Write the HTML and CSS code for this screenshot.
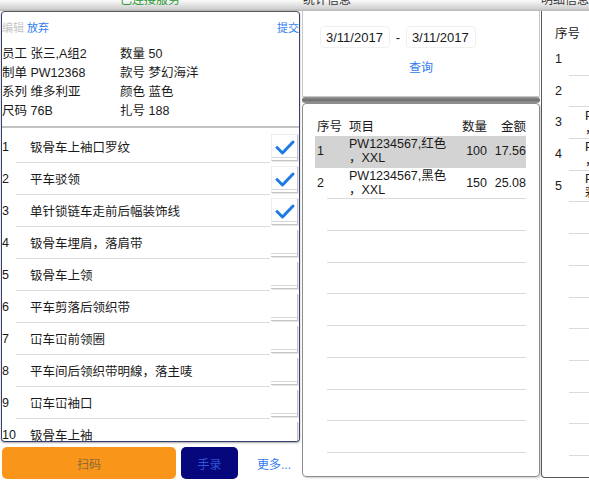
FILE: index.html
```html
<!DOCTYPE html>
<html lang="zh-CN">
<head>
    <meta charset="UTF-8">
    <meta name="viewport" content="width=device-width, initial-scale=1.0">
    <title>工序扫码</title>
    <link rel="stylesheet" href="styles.css">
</head>
<body>
    <div class="topbar">
        <span class="title title-main">已连接服务</span>
        <span class="title title-stat">统计信息</span>
        <span class="title title-detail">明细信息</span>
    </div>

    <div class="app">
        <!-- left: current work ticket -->
        <div class="left-col">
            <div class="ticket">
                <div class="ticket-head">
                    <div>
                        <span class="link-disabled">编辑</span>
                        <span class="link">放弃</span>
                    </div>
                    <span class="link">提交</span>
                </div>
                <div class="info-grid">
                    <div>员工 张三,A组2</div>
                    <div>数量 50</div>
                    <div>制单 PW12368</div>
                    <div>款号 梦幻海洋</div>
                    <div>系列 维多利亚</div>
                    <div>颜色 蓝色</div>
                    <div>尺码 76B</div>
                    <div>扎号 188</div>
                </div>
                <div class="info-sep"></div>
                <div class="op-list">
                    <div class="op-row">
                        <span class="op-num">1</span>
                        <div class="op-main">钑骨车上袖口罗纹</div>
                        <div class="chk checked">
                            <svg viewBox="0 0 27 27" width="27" height="27"><polyline points="6,13.5 11.5,19 22,8" /></svg>
                        </div>
                    </div>
                    <div class="op-row">
                        <span class="op-num">2</span>
                        <div class="op-main">平车驳领</div>
                        <div class="chk checked">
                            <svg viewBox="0 0 27 27" width="27" height="27"><polyline points="6,13.5 11.5,19 22,8" /></svg>
                        </div>
                    </div>
                    <div class="op-row">
                        <span class="op-num">3</span>
                        <div class="op-main">单针锁链车走前后幅装饰线</div>
                        <div class="chk checked">
                            <svg viewBox="0 0 27 27" width="27" height="27"><polyline points="6,13.5 11.5,19 22,8" /></svg>
                        </div>
                    </div>
                    <div class="op-row">
                        <span class="op-num">4</span>
                        <div class="op-main">钑骨车埋肩，落肩带</div>
                        <div class="chk"></div>
                    </div>
                    <div class="op-row">
                        <span class="op-num">5</span>
                        <div class="op-main">钑骨车上领</div>
                        <div class="chk"></div>
                    </div>
                    <div class="op-row">
                        <span class="op-num">6</span>
                        <div class="op-main">平车剪落后领织带</div>
                        <div class="chk"></div>
                    </div>
                    <div class="op-row">
                        <span class="op-num">7</span>
                        <div class="op-main">冚车冚前领圈</div>
                        <div class="chk"></div>
                    </div>
                    <div class="op-row">
                        <span class="op-num">8</span>
                        <div class="op-main">平车间后领织带明線，落主唛</div>
                        <div class="chk"></div>
                    </div>
                    <div class="op-row">
                        <span class="op-num">9</span>
                        <div class="op-main">冚车冚袖口</div>
                        <div class="chk"></div>
                    </div>
                    <div class="op-row">
                        <span class="op-num">10</span>
                        <div class="op-main">钑骨车上袖</div>
                        <div class="chk"></div>
                    </div>
                </div>
            </div>
            <div class="actions">
                <button class="btn btn-scan">扫码</button>
                <button class="btn btn-manual">手录</button>
                <span class="link more">更多...</span>
            </div>
        </div>

        <!-- middle: statistics -->
        <div class="mid-col">
            <div class="query-card">
                <div class="date-row">
                    <span class="date-box">3/11/2017</span>
                    <span class="date-dash">-</span>
                    <span class="date-box">3/11/2017</span>
                </div>
                <div class="link query">查询</div>
            </div>
            <div class="splitter"></div>
            <div class="stat-card">
                <div class="stat-head">
                    <span class="c-num">序号</span>
                    <span class="c-item">项目</span>
                    <span class="c-qty">数量</span>
                    <span class="c-amt">金额</span>
                </div>
                <div class="stat-row selected">
                    <span class="c-num">1</span>
                    <span class="c-item">PW1234567,红色<br>，XXL</span>
                    <span class="c-qty">100</span>
                    <span class="c-amt">17.56</span>
                </div>
                <div class="stat-row">
                    <span class="c-num">2</span>
                    <span class="c-item">PW1234567,黑色<br>，XXL</span>
                    <span class="c-qty">150</span>
                    <span class="c-amt">25.08</span>
                </div>
                <div class="stat-row"></div>
                <div class="stat-row"></div>
                <div class="stat-row"></div>
                <div class="stat-row"></div>
                <div class="stat-row"></div>
                <div class="stat-row"></div>
                <div class="stat-row"></div>
                <div class="stat-row"></div>
            </div>
        </div>

        <!-- right: details (cut off by the window) -->
        <div class="right-col">
            <div class="detail-head"><span class="d-num">序号</span></div>
            <div class="detail-row"><span class="d-num">1</span><span class="d-item"></span></div>
            <div class="detail-row"><span class="d-num">2</span><span class="d-item"></span></div>
            <div class="detail-row"><span class="d-num">3</span><span class="d-item">PW1234567<br>，XXL</span></div>
            <div class="detail-row"><span class="d-num">4</span><span class="d-item">PW1234567<br>，XXL</span></div>
            <div class="detail-row"><span class="d-num">5</span><span class="d-item">PW1234567<br>彩色</span></div>
            <div class="detail-row"></div>
            <div class="detail-row"></div>
            <div class="detail-row"></div>
            <div class="detail-row"></div>
            <div class="detail-row"></div>
            <div class="detail-row"></div>
            <div class="detail-row"></div>
            <div class="detail-row"></div>
        </div>
    </div>
</body>
</html>
```

FILE: styles.css
```css
/* Reset default browser styles */
body, html {
    margin: 0;
    padding: 0;
    width: 589px;
    height: 481px;
    overflow: hidden;
    background: #fff;
    color: #1a1a1a;
    font-family: "Liberation Sans", "Noto Sans CJK SC", sans-serif;
    font-size: 12.5px;
}

.link {
    color: #2f7bf0;
    cursor: pointer;
}

.link-disabled {
    color: #c4c4c4;
}

/* top strip with the cut off titles */
.topbar {
    display: flex;
    height: 11px;
    overflow: hidden;
    background: linear-gradient(#fbfbfb, #d0d0d0 80%, #b4b4b4);
}

.title {
    font-size: 12px;
    line-height: 12px;
    margin-top: -6px;
}

.title-main {
    width: 300px;
    text-align: center;
    color: #2e9a36;
}

.title-stat {
    width: 238px;
    padding-left: 3px;
    color: #333;
}

.title-detail {
    color: #333;
}

.app {
    display: flex;
    height: 470px;
}

/* left column */
.left-col {
    width: 300px;
    display: flex;
    flex-direction: column;
}

.ticket {
    width: 299px;
    height: 431px;
    margin-left: 1px;
    box-sizing: border-box;
    border: 1px solid #36406f;
    border-top-color: #5a5a5a;
    border-radius: 4px;
    box-shadow: 0 1px 2px rgba(0, 0, 0, 0.35);
    overflow: hidden;
}

.ticket-head {
    display: flex;
    justify-content: space-between;
    padding: 9px 0 0 0;
    font-size: 11px;
    line-height: 14px;
}

.info-grid {
    display: grid;
    grid-template-columns: 118px 1fr;
    margin-top: 10px;
    line-height: 19px;
    font-size: 12.5px;
}

.info-sep {
    height: 2px;
    margin-top: 5px;
    background: #c2c2c2;
}

.op-list {
    margin-top: 3px;
}

.op-row {
    display: flex;
    align-items: center;
    height: 32px;
}

.op-num {
    width: 14px;
    white-space: nowrap;
}

.op-main {
    flex: 1;
    align-self: stretch;
    display: flex;
    align-items: center;
    padding-left: 14px;
    border-bottom: 1px solid #dcdcdc;
}

.chk {
    width: 26px;
    height: 26px;
    margin: 0 1px 0 1px;
    border-right: 1px solid #c4c4c4;
    border-bottom: 1px solid #c4c4c4;
    box-shadow: 1px 1px 0 #e6e6e6, inset 0 -2px 0 #fff, inset 0 -3px 0 #d8d8d8;
}

.chk.checked {
    border-left: 1px solid #eee;
    border-top: 1px solid #eee;
    width: 25px;
    height: 25px;
}

.chk svg {
    display: block;
    margin: -1px 0 0 -1px;
}

.chk polyline {
    fill: none;
    stroke: #1f7ae6;
    stroke-width: 3;
    stroke-linecap: round;
    stroke-linejoin: round;
}

.actions {
    display: flex;
    align-items: center;
    margin-top: 5px;
    padding-left: 2px;
}

.btn {
    height: 32px;
    border: none;
    border-radius: 5px;
    font-family: inherit;
    font-size: 12px;
    cursor: pointer;
}

.btn-scan {
    width: 174px;
    background: #f9961a;
    color: #8c6a3c;
}

.btn-manual {
    width: 57px;
    margin-left: 5px;
    background: #06067d;
    color: #2f55d8;
}

.more {
    margin-left: 19px;
    font-size: 12px;
}

/* middle column */
.mid-col {
    width: 238px;
    margin-left: 2px;
    display: flex;
    flex-direction: column;
}

.query-card {
    height: 86px;
    box-sizing: border-box;
    border: 1px solid #c8c8c8;
    border-top: none;
    background: #fff;
}

.date-row {
    display: flex;
    align-items: center;
    margin: 15px 0 0 17px;
    font-size: 13px;
}

.date-box {
    height: 22px;
    line-height: 22px;
    padding: 0 6px 0 5px;
    border: 1px solid #f0f0f0;
    border-radius: 4px;
    box-sizing: border-box;
}

.date-dash {
    width: 16px;
    text-align: center;
}

.query {
    margin-top: 13px;
    text-align: center;
    font-size: 12px;
    line-height: 14px;
}

.splitter {
    height: 6px;
    border-radius: 3px;
    background: linear-gradient(#9a9a9a, #6e6e6e 50%, #9a9a9a);
}

.stat-card {
    height: 374px;
    box-sizing: border-box;
    padding: 10px 13px 0 12px;
    border: 1px solid #8c8c8c;
    border-radius: 4px;
    box-shadow: 1px 1px 2px rgba(0, 0, 0, 0.2);
    overflow: hidden;
}

.stat-head, .stat-row {
    display: flex;
    align-items: center;
}

.stat-head {
    height: 22px;
}

.stat-row {
    height: 31.7px;
    line-height: 13.5px;
    background: linear-gradient(#dadada, #dadada) no-repeat 12px 100% / calc(100% - 12px) 1px;
}

.stat-row.selected {
    background: #d3d3d3;
}

.c-num {
    width: 32px;
    padding-left: 2px;
}

.c-item {
    flex: 1;
}

.c-qty {
    width: 32px;
    text-align: right;
}

.c-amt {
    width: 39px;
    text-align: right;
}

/* right column */
.right-col {
    flex: 1;
    margin-left: 1px;
    height: 467px;
    box-sizing: border-box;
    padding-left: 11px;
    border-left: 1px solid #5a5a5a;
    border-bottom: 1px solid #5a5a5a;
    border-radius: 0 0 0 4px;
    overflow: hidden;
}

.detail-head, .detail-row {
    display: flex;
    align-items: center;
    white-space: nowrap;
}

.detail-head {
    height: 33px;
    padding-top: 10px;
    box-sizing: border-box;
}

.detail-row {
    height: 31.7px;
    line-height: 13.5px;
    background: linear-gradient(#dadada, #dadada) no-repeat 16px 100% / calc(100% - 16px) 1px;
}

.d-num {
    width: 30px;
    padding-left: 2px;
    flex-shrink: 0;
}

.d-item {
    flex-shrink: 0;
}
```
